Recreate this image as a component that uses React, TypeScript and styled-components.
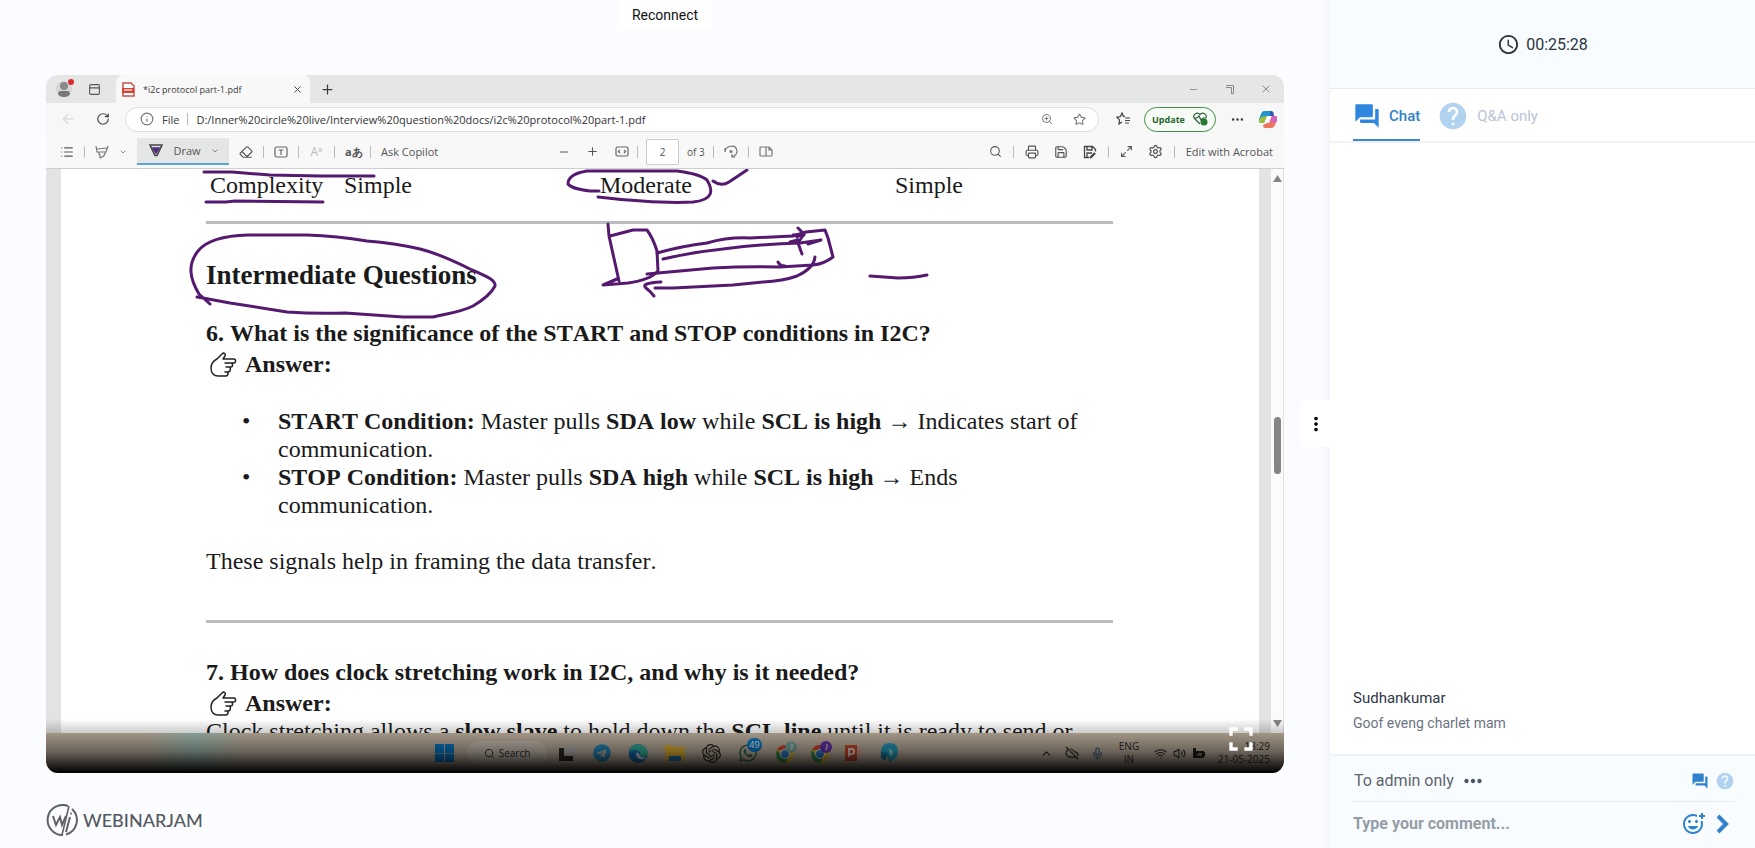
import React from "react";
import styled, { createGlobalStyle, css } from "styled-components";
import {
  MdAccessTime, MdForum, MdHelp, MdMoreHoriz, MdMoreVert, MdOutlineAddReaction, MdFullscreen,
} from "react-icons/md";
import {
  ArrowLeft, RotateCw, Info, X, Plus, Minus, ZoomIn, Star, Search, Printer, Save, Maximize2, Settings,
  Eraser, ChevronDown, ChevronUp, CloudOff, Mic, Wifi, Volume2, List,
  PanelTop, Ellipsis,
} from "lucide-react";
import { SiOpenai } from "react-icons/si";
import { FaWhatsapp, FaTelegram } from "react-icons/fa";

const Global = createGlobalStyle`
  *, *::before, *::after { box-sizing: border-box; }
  body { margin: 0; font-family: Roboto, "Liberation Sans", sans-serif; background: #fbfcff; color: #2c3440; }
  button { border: 0; padding: 0; background: none; font: inherit; color: inherit; cursor: pointer; }
  svg { display: block; flex: none; }
`;

const Shell = styled.div`
  display: grid;
  grid-template-columns: minmax(0, 1fr) 425px;
  min-height: 100vh;
`;

const Stage = styled.main`
  position: relative;
  display: flex;
  flex-direction: column;
  padding: 75px 46px 0;
  box-shadow: inset -10px 0 10px -8px #eceff6;
`;

const Reconnect = styled.button`
  position: absolute;
  top: 0;
  left: 50%;
  transform: translateX(-50%);
  height: 30px;
  padding: 0 14px;
  background: #fff;
  font-size: 14px;
  color: #111;
`;

const MenuHandle = styled.button`
  position: absolute;
  right: 0;
  top: 400px;
  width: 29px;
  height: 47px;
  display: grid;
  place-items: center;
  background: #fff;
  border-radius: 4px 0 0 4px;
  color: #000;
`;

const Player = styled.section`
  position: relative;
  height: 698px;
  border-radius: 12px;
  overflow: hidden;
  display: flex;
  flex-direction: column;
  background: #f7f7f7;
  color: #3a3a3a;
  font-family: "Open Sans", "Noto Sans", sans-serif;
`;

const TabStrip = styled.div`
  height: 28px;
  display: flex;
  align-items: stretch;
  background: #e5e7e6;
`;

const Profile = styled.div`
  width: 70px;
  display: flex;
  align-items: center;
  padding-left: 10px;
  gap: 14px;
`;

const Tab = styled.div`
  width: 194px;
  display: flex;
  align-items: center;
  padding: 0 7px 0 5px;
  gap: 8px;
  background: #f8f8f8;
  border-radius: 7px 7px 0 0;
  font-size: 9px;
  button { margin-left: auto; }
`;

const NewTab = styled.button`
  padding-left: 10px;
`;

const WindowButtons = styled.div`
  margin-left: auto;
  display: flex;
  align-items: center;
  gap: 26px;
  padding-right: 12px;
  color: #8a8a8a;
`;

const AddressRow = styled.div`
  height: 32px;
  display: flex;
  align-items: center;
  padding: 0 7px 0 14px;
  gap: 20px;
`;

const AddressBox = styled.div`
  flex: 1;
  height: 25px;
  margin-left: -5px;
  display: flex;
  align-items: center;
  gap: 8px;
  padding: 0 12px 0 14px;
  background: #fff;
  border: 1px solid #dedede;
  border-radius: 13px;
  font-size: 11px;
`;

const UrlInput = styled.input`
  flex: 1;
  min-width: 0;
  border: 0;
  padding: 0;
  outline: 0;
  font: inherit;
  color: #333;
  background: transparent;
`;

const BoxTools = styled.div`
  display: flex;
  gap: 20px;
  color: #777;
`;

const BrowserTools = styled.div`
  display: flex;
  align-items: center;
  gap: 14px;
  margin-left: -3px;
`;

const UpdateButton = styled.button`
  height: 25px;
  width: 72px;
  display: flex;
  align-items: center;
  justify-content: center;
  gap: 8px;
  border: 1px solid #3f8f48;
  border-radius: 13px;
  background: #f6fbf6;
  color: #25652d;
  font-size: 9px;
  font-weight: 700;
`;

const PdfBar = styled.div`
  height: 34px;
  display: grid;
  grid-template-columns: 504px minmax(0, 1fr) auto;
  align-items: center;
  padding-right: 11px;
  background: #f8f8f8;
  border-bottom: 1px solid #cfcfcf;
  font-size: 11px;
  color: #555;
`;

const ToolGroup = styled.div<{ $gap: number; $pad?: number }>`
  display: flex;
  align-items: center;
  gap: ${(p) => p.$gap}px;
  padding-left: ${(p) => p.$pad ?? 0}px;
  white-space: nowrap;
`;

const Divider = styled.span`
  width: 1px;
  height: 12px;
  background: #bbb;
`;

const DrawButton = styled.button`
  width: 92px;
  height: 27px;
  display: flex;
  align-items: center;
  justify-content: space-between;
  padding: 0 10px 0 12px;
  background: #e4e5e5;
  border-bottom: 2px solid #5ba4d4;
`;

const GlyphButton = styled.button<{ $faded?: boolean }>`
  width: 15px;
  font-size: ${(p) => (p.$faded ? 12 : 11)}px;
  font-weight: ${(p) => (p.$faded ? 400 : 700)};
  color: ${(p) => (p.$faded ? "#bbb" : "#555")};
`;

const PageInput = styled.input`
  width: 33px;
  height: 26px;
  border: 1px solid #ccc;
  border-radius: 2px;
  background: #fff;
  text-align: center;
  font: inherit;
  font-size: 10px;
  color: #555;
`;

const PageCount = styled.span`
  font-size: 10px;
`;

const Viewer = styled.div`
  flex: 1;
  min-height: 0;
  display: flex;
  background: #e3e3e3;
  padding-left: 15px;
`;

const Paper = styled.article`
  position: relative;
  flex: 1;
  overflow: hidden;
  margin-right: 12px;
  padding: 2px 100px 0 145px;
  background: #fff;
  color: #1a1a1a;
  font: 24px/28px "Liberation Serif", "Times New Roman", serif;
  font-kerning: none;
`;

const TraitRow = styled.div`
  display: flex;
  margin-bottom: 22px;
  padding-left: 4px;
  span:nth-child(1) { width: 134px; }
  span:nth-child(2) { width: 256px; }
  span:nth-child(3) { width: 295px; }
`;

const Rule = styled.hr`
  width: 907px;
  max-width: 100%;
  height: 3px;
  border: 0;
  margin: 0;
  background: #bcbcbc;
`;

const Title = styled.h2`
  margin: 35px 0 28px;
  font-size: 27px;
  line-height: 32px;
`;

const Question = styled.h3`
  margin: 0 0 3px;
  font-size: 24px;
  line-height: 28px;
`;

const Answer = styled.p`
  display: flex;
  align-items: center;
  gap: 8px;
  margin: 0;
  padding-left: 3px;
  font-weight: 700;
`;

const Bullets = styled.ul`
  list-style: none;
  margin: 29px 0 28px;
  padding-left: 72px;
  max-width: 890px;
  li::before {
    content: "•";
    display: inline-block;
    width: 36px;
    margin-left: -36px;
  }
`;

const Para = styled.p`
  margin: 0;
`;

const Section = styled.section`
  margin-top: 45px;
  h3 { margin-top: 35px; }
`;

const Ink = styled.svg`
  position: absolute;
  left: 0;
  top: 0;
  fill: none;
  stroke: #551a70;
  stroke-width: 3;
  stroke-linecap: round;
  stroke-linejoin: round;
`;

const ScrollTrack = styled.div`
  width: 13px;
  display: flex;
  flex-direction: column;
  align-items: center;
  justify-content: space-between;
  padding: 6px 0;
  background: #fbfbfb;
  border-right: 1px solid #e0e0e0;
`;

const ScrollThumb = styled.div`
  width: 7px;
  height: 57px;
  margin-bottom: 12px;
  border-radius: 4px;
  background: #858585;
`;

const Taskbar = styled.div`
  height: 40px;
  display: flex;
  align-items: center;
  justify-content: flex-end;
  background: linear-gradient(90deg, #c9baa7 8%, #a8c6bb 12%, #c9baa7 16%);
  color: #2b2723;
  font-size: 10px;
`;

const Apps = styled.div`
  flex: 1;
  display: flex;
  align-items: center;
  gap: 17px;
  padding-left: 389px;
`;

const TaskSearch = styled.div`
  width: 80px;
  height: 24px;
  margin: 0 -5px 0 -4px;
  display: flex;
  align-items: center;
  justify-content: center;
  gap: 4px;
  border-radius: 12px;
  background: #d3c8ba;
`;

const Tray = styled.div`
  display: flex;
  align-items: center;
  gap: 12px;
  padding-right: 14px;
`;

const StatusIcons = styled.div`
  display: flex;
  align-items: center;
  gap: 6px;
`;

const TrayText = styled.div<{ $end?: boolean }>`
  display: flex;
  flex-direction: column;
  line-height: 13px;
  ${(p) => p.$end ? css`text-align: right;` : css`text-align: center; width: 20px; margin: 0 3px;`}
`;

const Shade = styled.div`
  position: absolute;
  left: 0;
  right: 0;
  bottom: 0;
  height: 54px;
  pointer-events: none;
  background: linear-gradient(#0000 0, #0003 26%, #0007 60%, #000b 80%, #000 100%);
`;

const Fullscreen = styled.button`
  position: absolute;
  right: 23px;
  bottom: 14px;
  color: #fff;
`;

const Brand = styled.footer`
  display: flex;
  align-items: center;
  gap: 4px;
  margin-top: 31px;
  color: #54595f;
  font: 500 18px/32px Lato, sans-serif;
`;

const Panel = styled.aside`
  display: flex;
  flex-direction: column;
  background: #fff;
`;

const Timer = styled.header`
  height: 89px;
  display: flex;
  align-items: center;
  justify-content: center;
  gap: 6px;
  background: #f8fcff;
  border-bottom: 1px solid #e6ebf0;
  font-size: 16px;
`;

const Tabs = styled.nav`
  height: 54px;
  display: flex;
  gap: 17px;
  padding-left: 23px;
  border-bottom: 2px solid #f0f2f4;
`;

const PanelTab = styled.button<{ $active?: boolean }>`
  display: flex;
  align-items: center;
  gap: 8px;
  padding-top: 4px;
  font-size: 15px;
  font-weight: ${(p) => (p.$active ? 500 : 400)};
  color: ${(p) => (p.$active ? "#3182ce" : "#bcc4d8")};
  border-bottom: 2px solid ${(p) => (p.$active ? "#3b86d8" : "transparent")};
  svg { color: ${(p) => (p.$active ? "#2f86de" : "#b1d3f0")}; }
`;

const Messages = styled.div`
  flex: 1;
  display: flex;
  flex-direction: column;
  justify-content: flex-end;
  padding: 0 23px 21px;
`;

const Author = styled.div`
  font-size: 15px;
  line-height: 20px;
  color: #2d3748;
`;

const Message = styled.div`
  margin-top: 5px;
  font-size: 14px;
  line-height: 20px;
  color: #6b7280;
`;

const Composer = styled.form`
  padding: 0 20px 0 23px;
  background: #f8fcff;
  border-top: 2px solid #eff2f4;
`;

const ComposerRow = styled.div<{ $line?: boolean }>`
  height: 46px;
  display: flex;
  align-items: center;
  color: #5c6470;
  ${(p) => p.$line
    ? css`gap: 6px; padding: 4px 0 0 1px; border-bottom: 1px solid #e6ebef;`
    : css`gap: 11px; padding: 0 6px 3px 0;`}
`;

const Spacer = styled.span`
  flex: 1;
`;

const CommentInput = styled.input`
  flex: 1;
  min-width: 0;
  border: 0;
  padding: 0;
  outline: 0;
  background: transparent;
  font: 700 16px Roboto, sans-serif;
  &::placeholder { color: #959ea6; opacity: 1; }
`;

const IconButton = styled.button<{ $tone: string }>`
  color: ${(p) => p.$tone};
`;

const Hand = () => (
  <svg width="28" height="25" viewBox="0 0 28 25" fill="none" stroke="#222" strokeWidth="1.5" strokeLinecap="round" strokeLinejoin="round">
    <path d="M14 7h11c2 0 2 4 0 4h-9M14 7l2-3c1-2-1-4-3-2L8 7c-4 2-6 5-6 9 0 5 3 8 7 8h8c2 0 3-4 1-4h-2M17 11h5c2 0 2 4 0 4h-5M17 15h3c2 0 2 5-1 5h-3" />
  </svg>
);

const ProfileIcon = () => (
  <svg width="18" height="20" viewBox="0 0 18 20">
    <circle cx="8" cy="10" r="8" fill="#d5d5d5" /><circle cx="8" cy="7" r="4" fill="#888" />
    <path d="M2 15q0-3 3-3h6q3 0 3 3-1 3-6 3t-6-3z" fill="#777" /><circle cx="15" cy="3" r="3" fill="#d92b2b" />
  </svg>
);

const PdfIcon = () => (
  <svg width="14" height="15" viewBox="0 0 14 15">
    <path d="M2 1h8l3 3v10H2z" fill="#fff" stroke="#c85248" strokeWidth="1.5" />
    <path d="M1 6h12v5H1z" fill="#d44436" /><path d="M3 8h8" stroke="#fbd5d0" strokeWidth="1.5" />
  </svg>
);

const HighlighterIcon = () => (
  <svg width="14" height="14" viewBox="0 0 14 14" fill="none" stroke="#777" strokeWidth="1.2" strokeLinejoin="round">
    <path d="M1 1l1 6h9l2-6M2 4l10-1M4 7v2l1 1v3l4-2v-1l1-1V7" />
  </svg>
);

const PenIcon = () => (
  <svg width="14" height="13" viewBox="0 0 14 13" fill="none" stroke="#444" strokeWidth="1.6">
    <path d="M1 1h12L8 11.500H6z" /><path d="M4 4h6L7 9z" fill="#532a7d" stroke="#532a7d" />
  </svg>
);

const SaveAsIcon = () => (
  <svg width="14" height="14" viewBox="0 0 14 14" fill="none" stroke="#444" strokeWidth="1.3">
    <path d="M6 12.500H1.500v-11h8l3 3v2M4 2v3h5V2M4 12V8h5" /><path d="M7 13l5-5" strokeWidth="2.400" />
  </svg>
);

const FavoritesIcon = () => (
  <svg width="14" height="14" viewBox="0 0 14 14" fill="none" stroke="#444" strokeWidth="1.2">
    <path d="M9 4L7.500 4.500 6 1 4.300 4.700.8 5.200l2.700 2.700L3 12l3-2M9 6h5M9 8.500h5M9 11h4" />
  </svg>
);

const HeartBadgeIcon = () => (
  <svg width="15" height="14" viewBox="0 0 15 14" fill="none" stroke="#2f5c36" strokeWidth="1.2">
    <path d="M7 12L1.500 6.500C-1 3 4-1 7 2.500 10-1 15 3 12.500 6.500M1 6h3l2-2 2 4 2-2h2" />
    <circle cx="11" cy="10" r="3.500" fill="#217a30" stroke="none" />
  </svg>
);

const FitIcon = () => (
  <svg width="14" height="11" viewBox="0 0 14 11" fill="none" stroke="#666" strokeWidth="1.2">
    <rect x="1" y="1" width="12" height="9" rx="1.500" /><path d="M5 4L3.500 5.500 5 7M9 4l1.500 1.500L9 7" />
  </svg>
);

const TextBoxIcon = () => (
  <svg width="14" height="12" viewBox="0 0 14 12" fill="none" stroke="#666" strokeWidth="1.2">
    <rect x="1" y="1" width="12" height="10" rx="1.500" /><path d="M4.500 4h5M7 4v5" />
  </svg>
);

const RotateIcon = () => (
  <svg width="14" height="13" viewBox="0 0 14 13" fill="none" stroke="#777" strokeWidth="1.2">
    <path d="M1 7V3M1 7c1-7 11-8 12-1 0 3-2 5-5 6M8 9v3h3" /><circle cx="7" cy="6.500" r="1" fill="#777" />
  </svg>
);

const PageViewIcon = () => (
  <svg width="14" height="11" viewBox="0 0 14 11" fill="none" stroke="#777" strokeWidth="1.2">
    <path d="M7 1H2Q1 1 1 2v7q0 1 1 1h5zM7 1h3l3 3v5q0 1-1 1H7M10 1v3h3" />
  </svg>
);

const CopilotIcon = () => (
  <svg width="18" height="17" viewBox="0 0 18 17">
    <path d="M5 0h7q2 0 2.500 2L12 5H8L5 12H2q-3 0-2-4l2-5Q3 0 5 0z" fill="#2494cf" />
    <path d="M2 6l6-1-3 7H2q-3 0-2-3z" fill="#9fbe3c" />
    <path d="M13 5h3q3 0 2 4l-2 5q-1 3-3 3H6q-2 0-2-3l4-2h2z" fill="#ee7560" />
    <path d="M13 5h3q3 0 2 4l-1 3-6-2z" fill="#cf63bd" /><path d="M11 0q3 0 3.500 2L15 5h-4z" fill="#2f55b5" />
    <path d="M8 6h4l-2 5H6z" fill="#fff" />
  </svg>
);

const WindowsIcon = () => (
  <svg width="19" height="18" viewBox="0 0 19 18" fill="#087fd1">
    <path d="M0 0h9v9H0zM10 0h9v9h-9zM0 9.500h9V18H0zM10 9.500h9V18h-9z" />
  </svg>
);

const TaskViewIcon = () => (
  <svg width="17" height="16" viewBox="0 0 17 16"><path d="M5 0h12v11H5z" fill="#c1bcb8" /><path d="M0 3h5v8h9v5H0z" fill="#312d2b" /></svg>
);

const EdgeIcon = () => (
  <svg width="20" height="19" viewBox="0 0 20 19">
    <circle cx="10" cy="9.500" r="9.500" fill="#1672bb" /><path d="M1 8C3-2 19-2 20 9c0 4-7 5-8 2 2-4-7-7-11-3z" fill="#36bca0" />
    <path d="M9 8c-3 5 3 10 9 6-2-1-7-1-6-3z" fill="#c9dfeb" />
  </svg>
);

const FolderIcon = () => (
  <svg width="20" height="18" viewBox="0 0 20 18"><path d="M0 1h7l2 2h11v14H0z" fill="#f0bd35" /><path d="M4 12h12v5H4z" fill="#2380c4" /></svg>
);

const ChromeSvg = styled.svg`
  margin-right: -6px;
`;

const ChromeIcon = ({ badge }: { badge: string }) => (
  <ChromeSvg width="24" height="24" viewBox="0 0 24 24">
    <circle cx="10" cy="13" r="9" fill="#e5bd32" />
    <path d="M2 9a9 9 0 0 1 16 0H10z" fill="#dc4937" /><path d="M2 9a9 9 0 0 0 8 13l3-6-6-1z" fill="#34964d" />
    <circle cx="10" cy="13" r="4.500" fill="#3181d2" stroke="#eee" strokeWidth="1" />
    <circle cx="16" cy="6" r="6" fill={badge} />
    <path d="M17 3v4q0 2-2 1" fill="none" stroke="#eee" strokeWidth="1" />
  </ChromeSvg>
);

const PptIcon = () => (
  <svg width="18" height="18" viewBox="0 0 18 18"><path d="M6 2h11v14H6z" fill="#d8b3a4" /><path d="M0 1h12v16H0z" fill="#d34c2b" /><path d="M4 13V5h3q2 0 2 2.500T7 10H4" fill="none" stroke="#fff" strokeWidth="1.600" /></svg>
);

const BlueAppIcon = () => (
  <svg width="18" height="20" viewBox="0 0 18 20"><path d="M1 9C1 3 4 0 10 0s8 4 8 9-2 7-6 8l-2 3-2-5z" fill="#28a5c6" /><path d="M1 9l7 1-3 8-4-3z" fill="#1880a5" /><path d="M9 5l4 3-1 6-3-4z" fill="#7de0e5" /></svg>
);

const WhatsAppBox = styled.span`
  position: relative;
  color: #2e6b51;
  font-size: 20px;
`;

const Count = styled.span`
  position: absolute;
  left: 9px;
  top: -5px;
  width: 15px;
  height: 14px;
  border-radius: 7px;
  background: #0a80d4;
  color: #fff;
  font-size: 9px;
  line-height: 14px;
  text-align: center;
`;

const BatteryIcon = () => (
  <svg width="14" height="11" viewBox="0 0 14 11"><path d="M1 3h11v1h1v4h-1v2H1zM1 0h3v4H1z" fill="#25211e" /><path d="M6 5h4v3H5z" fill="#81776b" /></svg>
);

const BrandMark = () => (
  <svg width="33" height="32" viewBox="0 0 33 32" fill="none" stroke="#5f6368" strokeWidth="2">
    <path d="M22 2A15 15 0 1 0 17 31" /><path d="M26 5A15 15 0 0 1 20 30.500" />
    <path d="M23 2L16 31" strokeWidth="1.600" />
    <path d="M7 12l3 9 4-8 2 8 4-9" /><path d="M24 13l-4 15" /><circle cx="25" cy="9.500" r="1" fill="#5f6368" stroke="none" />
  </svg>
);

const SendIcon = () => (
  <svg width="13" height="20" viewBox="0 0 13 20" fill="none" stroke="#3182ce" strokeWidth="4"><path d="M2 2l8 8-8 8" /></svg>
);

const Triangle = ({ down }: { down?: boolean }) => (
  <svg width="9" height="7" viewBox="0 0 9 7"><path d={down ? "M0 0h9L4.500 7z" : "M0 7h9L4.500 0z"} fill="#858585" /></svg>
);

/* Pen annotations drawn over the top part of the page */
const Annotations = () => (
  <Ink width="1000" height="160" viewBox="61 168 1000 160" aria-hidden="true">
    <path d="M204 171L232 171 270 174 320 175 374 175M206 201H226L235 200 323 201" />
    <path d="M197 296L203 297 230 302 287 311Q315 313 345 312L403 316H433C450 312 461 311 473 305Q490 295 495 285C496 279 486 275 470 268Q440 253 420 248Q394 242 367 240 337 235 307 234H248Q210 235 198 250C187 264 190 278 199 293L210 303" />
    <path d="M599 190H590Q572 188 568 183 568 173 587 170H677Q700 173 707 179C713 189 714 199 693 201Q660 203 598 196M713 180Q721 186 729 181L747 169" />
    <path d="M608 223L609 235 619 280M610 235L633 229 647 229Q653 237 657 250L658 270Q650 279 628 282L603 284 617 278" />
    <path d="M657 252Q682 245 707 242 728 236 750 237L793 235 806 231 825 229 828 237 833 256Q824 263 813 264L780 266Q747 265 713 267L647 273M663 258Q693 251 723 248 762 243 800 242L821 239 808 243" />
    <path d="M798 227L804 233 798 242 802 253M793 234H804M797 236L801 234M790 241L798 239M778 261Q780 265 785 265" />
    <path d="M815 256Q814 267 797 275 783 280 763 281L733 284 673 287H655M661 281Q640 282 646 287 650 290 654 295" />
    <path d="M870 275L898 277Q914 277 927 274" />
  </Ink>
);

export default function App() {
  return (
    <>
      <Global />
      <Shell>
        <Stage>
          <Reconnect>Reconnect</Reconnect>
          <Player>
            <TabStrip>
              <Profile><ProfileIcon /><PanelTop size={13} color="#555" /></Profile>
              <Tab><PdfIcon /><span>*i2c protocol part-1.pdf</span><button aria-label="Close tab"><X size={11} /></button></Tab>
              <NewTab aria-label="New tab"><Plus size={15} /></NewTab>
              <WindowButtons>
                <Minus size={11} />
                <svg width="9" height="9" viewBox="0 0 9 9" fill="none" stroke="currentColor"><path d="M1 .5h7.500V8.500H6M1 2.500h5.500v6" /></svg>
                <X size={12} />
              </WindowButtons>
            </TabStrip>
            <AddressRow>
              <ArrowLeft size={16} color="#ddd" />
              <RotateCw size={14} color="#444" />
              <AddressBox>
                <Info size={14} color="#777" /><label htmlFor="url">File</label><Divider />
                <UrlInput id="url" readOnly value="D:/Inner%20circle%20live/Interview%20question%20docs/i2c%20protocol%20part-1.pdf" />
                <BoxTools><ZoomIn size={12} /><Star size={13} /></BoxTools>
              </AddressBox>
              <BrowserTools>
                <FavoritesIcon />
                <UpdateButton>Update <HeartBadgeIcon /></UpdateButton>
                <Ellipsis size={15} />
                <CopilotIcon />
              </BrowserTools>
            </AddressRow>
            <PdfBar>
              <ToolGroup $gap={10} $pad={14}>
                <List size={14} /><Divider /><HighlighterIcon /><ChevronDown size={8} />
                <DrawButton><PenIcon />Draw<ChevronDown size={8} /></DrawButton>
                <Eraser size={14} /><Divider /><TextBoxIcon /><Divider />
                <GlyphButton $faded>Aᵃ</GlyphButton><Divider /><GlyphButton>aあ</GlyphButton><Divider />
                <button>Ask Copilot</button>
              </ToolGroup>
              <ToolGroup $gap={8} $pad={8}>
                <ToolGroup $gap={16}><Minus size={12} /><Plus size={13} /><FitIcon /></ToolGroup><Divider />
                <PageInput aria-label="Page" defaultValue="2" /><PageCount>of 3</PageCount>
                <ToolGroup $gap={10}><Divider /><RotateIcon /><Divider /><PageViewIcon /></ToolGroup>
              </ToolGroup>
              <ToolGroup $gap={11}>
                <Search size={13} /><Divider />
                <ToolGroup $gap={15}><Printer size={14} /><Save size={14} /><SaveAsIcon /></ToolGroup><Divider />
                <ToolGroup $gap={15}><Maximize2 size={13} /><Settings size={15} /></ToolGroup><Divider />
                <button>Edit with Acrobat</button>
              </ToolGroup>
            </PdfBar>
            <Viewer>
              <Paper>
                <TraitRow><span>Complexity</span><span>Simple</span><span>Moderate</span><span>Simple</span></TraitRow>
                <Rule />
                <Title>Intermediate Questions</Title>
                <Question>6. What is the significance of the START and STOP conditions in I2C?</Question>
                <Answer><Hand />Answer:</Answer>
                <Bullets>
                  <li><b>START Condition:</b> Master pulls <b>SDA low</b> while <b>SCL is high</b> → Indicates start of communication.</li>
                  <li><b>STOP Condition:</b> Master pulls <b>SDA high</b> while <b>SCL is high</b> → Ends<br />communication.</li>
                </Bullets>
                <Para>These signals help in framing the data transfer.</Para>
                <Section>
                  <Rule />
                  <Question>7. How does clock stretching work in I2C, and why is it needed?</Question>
                  <Answer><Hand />Answer:</Answer>
                  <Para>Clock stretching allows a <b>slow slave</b> to hold down the <b>SCL line</b> until it is ready to send or</Para>
                </Section>
                <Annotations />
              </Paper>
              <ScrollTrack><Triangle /><ScrollThumb /><Triangle down /></ScrollTrack>
            </Viewer>
            <Taskbar>
              <Apps>
                <WindowsIcon /><TaskSearch><Search size={11} />Search</TaskSearch><TaskViewIcon />
                <FaTelegram size={18} color="#258fc8" /><EdgeIcon /><FolderIcon /><SiOpenai size={19} />
                <WhatsAppBox><FaWhatsapp /><Count>49</Count></WhatsAppBox>
                <ChromeIcon badge="#7fb1a6" /><ChromeIcon badge="#6d35b5" /><PptIcon /><BlueAppIcon />
              </Apps>
              <Tray>
                <ChevronUp size={13} /><CloudOff size={14} /><Mic size={13} color="#31568c" />
                <TrayText><span>ENG</span><span>IN</span></TrayText>
                <StatusIcons><Wifi size={13} /><Volume2 size={13} /><BatteryIcon /></StatusIcons>
                <TrayText $end><span>18:29</span><span>21-05-2025</span></TrayText>
              </Tray>
            </Taskbar>
            <Shade />
            <Fullscreen aria-label="Full screen"><MdFullscreen size={40} /></Fullscreen>
          </Player>
          <MenuHandle aria-label="More"><MdMoreVert size={22} /></MenuHandle>
          <Brand><BrandMark />WEBINARJAM</Brand>
        </Stage>
        <Panel>
          <Timer><MdAccessTime size={23} />00:25:28</Timer>
          <Tabs>
            <PanelTab $active><MdForum size={28} />Chat</PanelTab>
            <PanelTab><MdHelp size={32} />Q&amp;A only</PanelTab>
          </Tabs>
          <Messages><Author>Sudhankumar</Author><Message>Goof eveng charlet mam</Message></Messages>
          <Composer>
            <ComposerRow $line>
              <span>To admin only</span><IconButton type="button" $tone="#4a5568" aria-label="Recipients"><MdMoreHoriz size={26} /></IconButton>
              <Spacer />
              <IconButton type="button" $tone="#3182ce" aria-label="Chat"><MdForum size={18} /></IconButton>
              <IconButton type="button" $tone="#b1d3f0" aria-label="Question"><MdHelp size={20} /></IconButton>
            </ComposerRow>
            <ComposerRow>
              <CommentInput aria-label="Comment" placeholder="Type your comment..." />
              <IconButton type="button" $tone="#3182ce" aria-label="Emoji"><MdOutlineAddReaction size={24} /></IconButton>
              <IconButton $tone="#3182ce" aria-label="Send"><SendIcon /></IconButton>
            </ComposerRow>
          </Composer>
        </Panel>
      </Shell>
    </>
  );
}
